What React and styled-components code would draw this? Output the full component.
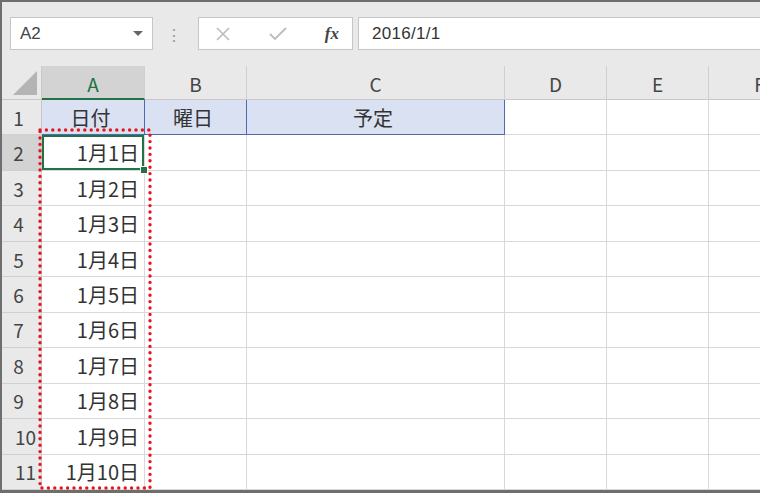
import React from "react";
import styled, { createGlobalStyle } from "styled-components";

const Global = createGlobalStyle`
  html, body { margin: 0; padding: 0; background: #fff; }
  body { font-family: "Noto Sans CJK JP", "Noto Sans", sans-serif; }
`;

const Frame = styled.div`
  width: 760px;
  height: 493px;
  box-sizing: border-box;
  border: 2px solid #6e6e6e;
  border-right: none;
  border-bottom-width: 3px;
  background: #fff;
  display: flex;
  flex-direction: column;
  overflow: hidden;
  position: relative;
`;

const Toolbar = styled.div`
  height: 64px;
  flex: none;
  background: #e9e9e9;
  display: flex;
  align-items: flex-start;
  padding: 15px 0 0 8px;
  box-sizing: border-box;
`;

const NameBox = styled.div`
  width: 143px;
  height: 33px;
  box-sizing: border-box;
  background: #fff;
  border: 1px solid #c6c6c6;
  display: flex;
  align-items: center;
  justify-content: space-between;
  padding: 0 9px 0 9px;
  font-family: "Liberation Sans", Arial, sans-serif;
  font-size: 17px;
  color: #444;
`;

const Caret = styled.span`
  width: 0;
  height: 0;
  border-left: 5px solid transparent;
  border-right: 5px solid transparent;
  border-top: 5px solid #666;
`;

const Grip = styled.div`
  width: 45px;
  height: 33px;
  display: flex;
  align-items: center;
  justify-content: center;
  padding-right: 4px;
  box-sizing: border-box;
  color: #9a9a9a;
  font-size: 16px;
`;

const FxBox = styled.div`
  width: 155px;
  height: 33px;
  box-sizing: border-box;
  background: #fff;
  border: 1px solid #c6c6c6;
  display: flex;
  align-items: center;
  justify-content: space-between;
  padding: 0 13px 0 16px;
`;

const Fx = styled.span`
  font-family: "Liberation Serif", "Times New Roman", serif;
  font-style: italic;
  font-weight: bold;
  font-size: 17px;
  color: #444;
`;

const FormulaInput = styled.div`
  flex: 1;
  margin-left: 5px;
  height: 33px;
  box-sizing: border-box;
  background: #fff;
  border: 1px solid #c6c6c6;
  border-right: none;
  display: flex;
  align-items: center;
  padding-left: 13px;
  font-family: "Liberation Sans", Arial, sans-serif;
  font-size: 17px;
  letter-spacing: 0.3px;
  color: #333;
`;

const Sheet = styled.div`
  flex: 1;
  display: grid;
  grid-template-columns: 40px 103px 102px 258px 102px 102px 102px;
  grid-template-rows: 34px repeat(11, 1fr);
  position: relative;
  font-family: "Noto Sans CJK JP", "Noto Sans", sans-serif;
`;

const Corner = styled.div`
  background: #e9e9e9;
  border-bottom: 1px solid #c8c8c8;
  border-right: 1px solid #c8c8c8;
  display: flex;
  align-items: flex-end;
  justify-content: flex-end;
  padding: 0 4px 4px 0;
  box-sizing: border-box;
`;

const ColHead = styled.div`
  background: ${(p) => (p.$active ? "#d3d3d3" : "#e9e9e9")};
  color: ${(p) => (p.$active ? "#217346" : "#444")};
  border-right: 1px solid #cfcfcf;
  border-bottom: ${(p) => (p.$active ? "2px solid #217346" : "1px solid #c8c8c8")};
  display: flex;
  align-items: center;
  justify-content: center;
  font-size: 19px;
  box-sizing: border-box;
  padding-top: 2px;
  white-space: nowrap;
`;

const RowHead = styled.div`
  background: ${(p) => (p.$active ? "#d3d3d3" : "#e9e9e9")};
  color: #444;
  border-bottom: 1px solid #d0d0d0;
  border-right: 1px solid #c8c8c8;
  display: flex;
  align-items: center;
  justify-content: ${(p) => (p.$wide ? "flex-end" : "center")};
  padding-right: ${(p) => (p.$wide ? "5px" : "6px")};
  font-size: 19px;
  box-sizing: border-box;
`;

const Cell = styled.div`
  position: relative;
  box-sizing: border-box;
  background: ${(p) => (p.$title ? "#d9e1f2" : "#fff")};
  border-right: 1px solid ${(p) => (p.$title ? "#4f6bad" : "#d9d9d9")};
  border-bottom: 1px solid ${(p) => (p.$title ? "#4f6bad" : "#d9d9d9")};
  display: flex;
  align-items: center;
  justify-content: ${(p) => (p.$title ? "center" : "flex-end")};
  padding-right: 5px;
  font-size: 20px;
  color: #333;
  ${(p) =>
    p.$selected &&
    `
    box-shadow: inset 0 0 0 2px #217346;
    &::after {
      content: "";
      position: absolute;
      right: -4px;
      bottom: -4px;
      width: 6px;
      height: 6px;
      background: #217346;
      border: 1px solid #fff;
      z-index: 2;
    }
  `}
`;

const Marquee = styled.svg`
  position: absolute;
  left: 35px;
  top: 61px;
  pointer-events: none;
  z-index: 3;
`;

const cols = ["A", "B", "C", "D", "E", "F"];
const titles = ["日付", "曜日", "予定"];

export default function App() {
  const rows = [];
  for (let r = 1; r <= 11; r++) {
    rows.push(
      <RowHead key={`h${r}`} $active={r === 2} $wide={r >= 10}>
        {r}
      </RowHead>
    );
    cols.forEach((c, i) => {
      if (r === 1 && i < 3) {
        rows.push(
          <Cell key={c + r} $title>
            {titles[i]}
          </Cell>
        );
      } else if (i === 0) {
        rows.push(
          <Cell key={c + r} $selected={r === 2}>
            1月{r - 1}日
          </Cell>
        );
      } else {
        rows.push(<Cell key={c + r} />);
      }
    });
  }

  return (
    <>
      <Global />
      <Frame>
        <Toolbar>
          <NameBox>
            A2
            <Caret />
          </NameBox>
          <Grip>⋮</Grip>
          <FxBox>
            <svg width="16" height="16" viewBox="0 0 16 16">
              <path d="M2 2 L14 14 M14 2 L2 14" stroke="#bcbcbc" strokeWidth="1.6" fill="none" />
            </svg>
            <svg width="20" height="16" viewBox="0 0 20 16">
              <path d="M2 8 L7 13 L18 2" stroke="#bcbcbc" strokeWidth="1.8" fill="none" />
            </svg>
            <Fx>fx</Fx>
          </FxBox>
          <FormulaInput>2016/1/1</FormulaInput>
        </Toolbar>
        <Sheet>
          <Corner>
            <svg width="24" height="24" viewBox="0 0 24 24">
              <polygon points="24,0 24,24 0,24" fill="#b4b4b4" />
            </svg>
          </Corner>
          {cols.map((c) => (
            <ColHead key={c} $active={c === "A"}>
              {c}
            </ColHead>
          ))}
          {rows}
          <Marquee width="116" height="364" viewBox="0 0 116 364">
            <rect
              x="3"
              y="3"
              width="110"
              height="358"
              fill="none"
              stroke="#e8141c"
              strokeWidth="3.4"
              strokeLinecap="round"
              strokeDasharray="0 6.4"
            />
          </Marquee>
        </Sheet>
      </Frame>
    </>
  );
}
